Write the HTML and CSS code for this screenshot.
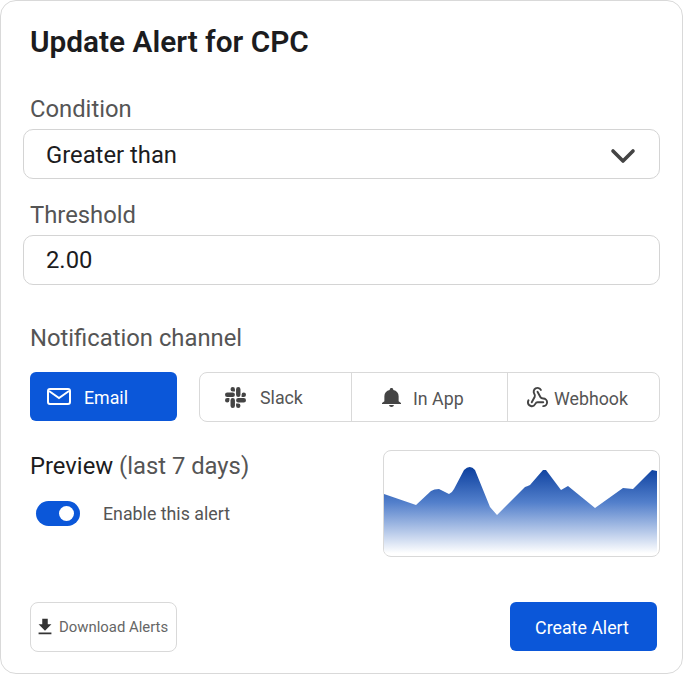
FILE: index.html
```html
<!DOCTYPE html>
<html lang="en">

<head>
    <meta charset="UTF-8" />
    <meta name="viewport" content="width=device-width, initial-scale=1.0" />
    <title>Update Alert</title>
    <link rel="stylesheet" href="styles.css">
</head>

<body>
    <main class="card">
        <h1 class="title">Update Alert for CPC</h1>

        <div class="field-label">Condition</div>
        <div class="box select">
            <span class="select-value">Greater than</span>
            <svg class="chevron" viewBox="0 0 26 16" width="26" height="16">
                <path d="M3 3l10 10L23 3" fill="none" stroke="#444" stroke-width="3.6" stroke-linecap="round" stroke-linejoin="round" />
            </svg>
        </div>

        <div class="field-label threshold-label">Threshold</div>
        <div class="box">2.00</div>

        <div class="field-label channel-label">Notification channel</div>
        <div class="channels">
            <button class="email-btn">
                <svg viewBox="0 0 24 20" width="24" height="20" fill="none" stroke="#fff" stroke-width="2">
                    <rect x="1" y="2" width="22" height="15" rx="2" />
                    <path d="M2 4l10 7 10-7" />
                </svg>
                <span>Email</span>
            </button>
            <div class="channel-group">
                <div class="channel slack">
                    <svg viewBox="0 0 24 24" width="21" height="21" fill="#444">
                        <path d="M5.042 15.165a2.528 2.528 0 0 1-2.52 2.523A2.528 2.528 0 0 1 0 15.165a2.527 2.527 0 0 1 2.522-2.52h2.52v2.52zM6.313 15.165a2.527 2.527 0 0 1 2.521-2.52 2.527 2.527 0 0 1 2.521 2.52v6.313A2.528 2.528 0 0 1 8.834 24a2.528 2.528 0 0 1-2.521-2.522v-6.313zM8.834 5.042a2.528 2.528 0 0 1-2.521-2.52A2.528 2.528 0 0 1 8.834 0a2.528 2.528 0 0 1 2.521 2.522v2.52H8.834zM8.834 6.313a2.528 2.528 0 0 1 2.521 2.521 2.528 2.528 0 0 1-2.521 2.521H2.522A2.528 2.528 0 0 1 0 8.834a2.528 2.528 0 0 1 2.522-2.521h6.312zM18.956 8.834a2.528 2.528 0 0 1 2.522-2.521A2.528 2.528 0 0 1 24 8.834a2.528 2.528 0 0 1-2.522 2.521h-2.522V8.834zM17.688 8.834a2.528 2.528 0 0 1-2.523 2.521 2.527 2.527 0 0 1-2.52-2.521V2.522A2.527 2.527 0 0 1 15.165 0a2.528 2.528 0 0 1 2.523 2.522v6.312zM15.165 18.956a2.528 2.528 0 0 1 2.523 2.522A2.528 2.528 0 0 1 15.165 24a2.527 2.527 0 0 1-2.52-2.522v-2.522h2.52zM15.165 17.688a2.527 2.527 0 0 1-2.52-2.523 2.526 2.526 0 0 1 2.52-2.52h6.313A2.527 2.527 0 0 1 24 15.165a2.528 2.528 0 0 1-2.522 2.523h-6.313z" />
                    </svg>
                    Slack
                </div>
                <div class="channel inapp">
                    <svg viewBox="4 2.5 16 19.5" width="19" height="19" preserveAspectRatio="none" fill="#444">
                        <path d="M12 22c1.1 0 2-.9 2-2h-4c0 1.1.9 2 2 2zm6-6v-5c0-3.07-1.63-5.64-4.5-6.32V4c0-.83-.67-1.5-1.5-1.5s-1.5.67-1.5 1.5v.68C7.64 5.36 6 7.92 6 11v5l-2 2v1h16v-1l-2-2z" />
                    </svg>
                    <span>In App</span>
                </div>
                <div class="channel webhook">
                    <svg viewBox="0 0 24 24" width="23" height="23" fill="none" stroke="#444" stroke-width="2" stroke-linecap="round" stroke-linejoin="round">
                        <path d="M18 16.98h-5.99c-1.1 0-1.95.94-2.48 1.9A4 4 0 0 1 2 17c.01-.7.2-1.4.57-2" />
                        <path d="m6 17 3.13-5.78c.53-.97.1-2.18-.5-3.1a4 4 0 1 1 6.89-4.06" />
                        <path d="m12 6 3.13 5.73C15.66 12.7 16.9 13 18 13a4 4 0 0 1 0 8" />
                    </svg>
                    <span>Webhook</span>
                </div>
            </div>
        </div>

        <div class="preview-row">
            <div class="preview-left">
                <div class="preview-title">Preview <span>(last 7 days)</span></div>
                <div class="toggle-row">
                    <div class="toggle"><div class="knob"></div></div>
                    <span>Enable this alert</span>
                </div>
            </div>
            <div class="chart">
                <svg viewBox="0 0 276 105" width="276" height="105">
                    <defs>
                        <linearGradient id="fade" x1="0" y1="0" x2="0" y2="1">
                            <stop offset="0" stop-color="#0b3f9e" />
                            <stop offset="0.4" stop-color="#527fcb" />
                            <stop offset="0.98" stop-color="#ffffff" />
                        </linearGradient>
                    </defs>
                    <path fill="url(#fade)" d="M0 43 L32 54 L47 40 Q50 38 55 38 L65 43 Q68 42 70 38 L80 19 Q86 13 91 19 L106 56 L113 64 L141 36 Q144 35 146 34 L159 19 L162 19 L177 39 L184 35 L211 57 L239 37 L249 38 L268 19 L273 20 L273 104 L0 104 Z" />
                </svg>
            </div>
        </div>

        <div class="footer">
            <button class="download-btn">
                <svg viewBox="0 0 24 24" width="22" height="22" fill="#333">
                    <path d="M19 9h-4V3H9v6H5l7 7 7-7zM5 18v2h14v-2H5z" />
                </svg>
                Download Alerts
            </button>
            <button class="create-btn">Create Alert</button>
        </div>
    </main>
</body>

</html>
```

FILE: styles.css
```css
* {
    margin: 0;
    padding: 0;
    box-sizing: border-box;
}

body {
    font-family: Roboto, 'Liberation Sans', sans-serif;
    background-color: #fff;
}

button {
    font-family: inherit;
    cursor: pointer;
}

.card {
    width: 683px;
    height: 674px;
    background-color: #fff;
    border: 1px solid #d9d9d9;
    border-radius: 16px;
    padding: 24px 22px 20px 22px;
}

.title {
    font-size: 29.8px;
    font-weight: 600;
    line-height: 33px;
    color: #1c1c1e;
    margin-left: 7px;
    margin-bottom: 37px;
}

.field-label {
    font-size: 23.8px;
    line-height: 28px;
    color: #555;
    margin-left: 7px;
    margin-bottom: 6px;
}

.threshold-label {
    margin-top: 22px;
}

.channel-label {
    margin-top: 39px;
    margin-bottom: 20px;
}

.box {
    height: 50px;
    width: 637px;
    border: 1px solid #d4d4d4;
    border-radius: 10px;
    background-color: #fff;
    padding: 0 22px;
    display: flex;
    align-items: center;
    font-size: 23.8px;
    color: #1c1c1e;
}

.select {
    justify-content: space-between;
}

.select-value {
    margin-top: 2px;
}

.chevron {
    margin-right: 1px;
    margin-top: 4px;
}

.channels {
    display: flex;
    gap: 22px;
    margin-left: 7px;
}

.email-btn {
    width: 147px;
    height: 49px;
    border: none;
    border-radius: 6px;
    background-color: #0b57d9;
    color: #fff;
    font-size: 17.8px;
    display: flex;
    align-items: center;
    gap: 13px;
    padding-left: 17px;
}

.email-btn span {
    margin-top: 2px;
}

.channel-group {
    display: flex;
    width: 461px;
    height: 50px;
    border: 1px solid #d9d9d9;
    border-radius: 8px;
}

.channel {
    display: flex;
    align-items: center;
    font-size: 17.8px;
    color: #555;
    border-left: 1px solid #d9d9d9;
}

.channel span {
    margin-top: 2px;
}

.slack {
    width: 151px;
    border-left: none;
    padding-left: 25px;
    gap: 14px;
}

.inapp {
    width: 156px;
    padding-left: 30px;
    gap: 12px;
}

.webhook {
    flex: 1;
    padding-left: 18px;
    gap: 5px;
}

.preview-row {
    display: flex;
    justify-content: space-between;
    margin-top: 28px;
}

.preview-left {
    margin-left: 7px;
}

.preview-title {
    font-size: 23.8px;
    line-height: 27px;
    color: #1c1c1e;
    margin-top: 3px;
}

.preview-title span {
    color: #555;
}

.toggle-row {
    display: flex;
    align-items: center;
    gap: 23px;
    margin-top: 21px;
    margin-left: 6px;
    font-size: 17.8px;
    color: #555;
}

.toggle {
    width: 44px;
    height: 25px;
    border-radius: 13px;
    background-color: #0b57d9;
    position: relative;
}

.knob {
    position: absolute;
    top: 5px;
    right: 6px;
    width: 15px;
    height: 15px;
    border-radius: 50%;
    background-color: #fff;
}

.chart {
    width: 277px;
    height: 107px;
    border: 1px solid #d9d9d9;
    border-radius: 8px;
    overflow: hidden;
    background-color: #fff;
}

.chart svg {
    display: block;
}

.footer {
    display: flex;
    justify-content: space-between;
    margin-top: 45px;
    margin-left: 7px;
    margin-right: 3px;
}

.download-btn {
    width: 147px;
    height: 50px;
    border: 1px solid #d9d9d9;
    border-radius: 8px;
    background-color: #fff;
    color: #666;
    font-size: 14.9px;
    display: flex;
    align-items: center;
    gap: 3px;
    padding-left: 3px;
}

.create-btn {
    width: 147px;
    height: 49px;
    border: none;
    border-radius: 6px;
    background-color: #0b57d9;
    color: #fff;
    font-size: 17.8px;
    padding: 2px 3px 0 0;
}
```
